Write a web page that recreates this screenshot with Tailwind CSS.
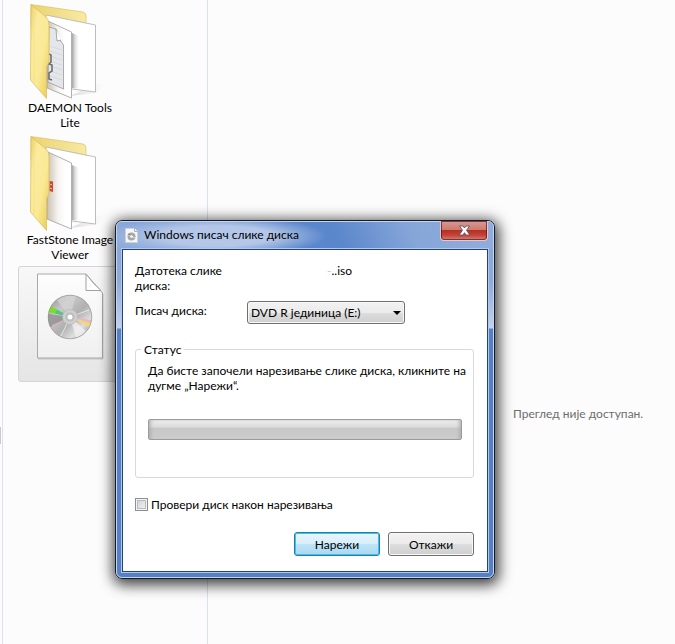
<!DOCTYPE html>
<html lang="sr">
<head>
<meta charset="utf-8">
<meta name="viewport" content="width=device-width, initial-scale=1">
<title>Windows писач слике диска</title>
<script src="https://cdn.jsdelivr.net/npm/@tailwindcss/browser@4"></script>
</head>
<body class="relative flex min-h-screen overflow-hidden bg-[#fcfcfc] font-['Lato','Open_Sans',sans-serif] text-[12px] leading-[15px] text-black">
<svg class="absolute size-0" aria-hidden="true">
  <defs>
    <linearGradient id="cover" x1="0" y1="0" x2="1" y2="1"><stop offset="0" stop-color="#e9ce68"/><stop offset=".25" stop-color="#fbeb9f"/><stop offset=".6" stop-color="#fae995"/><stop offset="1" stop-color="#eac94c"/></linearGradient>
    <linearGradient id="back" x1="0" y1="0" x2="1" y2="0"><stop offset="0" stop-color="#ecd370"/><stop offset="1" stop-color="#f8eaa4"/></linearGradient>
    <linearGradient id="sheetFront" x1="0" y1="0" x2="1" y2="0"><stop offset="0" stop-color="#c9c0b4"/><stop offset=".45" stop-color="#f6f4f1"/><stop offset=".75" stop-color="#fff"/></linearGradient>
    <linearGradient id="shade" x1="0" y1="0" x2="1" y2="0"><stop offset="0" stop-color="#999" stop-opacity=".9"/><stop offset="1" stop-color="#ddd" stop-opacity="0"/></linearGradient>
    <linearGradient id="paper" x1="0" y1="0" x2="0" y2="1"><stop offset="0" stop-color="#fdfdfd"/><stop offset="1" stop-color="#f0f0f0"/></linearGradient>
    <linearGradient id="disc" x1="0" y1="0" x2="1" y2="1"><stop offset="0" stop-color="#8e8e8e"/><stop offset=".3" stop-color="#c8c8c8"/><stop offset=".55" stop-color="#b0b0b0"/><stop offset=".75" stop-color="#dedede"/><stop offset="1" stop-color="#8a8a8a"/></linearGradient>
  </defs>
</svg>

<div class="w-[3px] shrink-0 border-r border-[#dbe3f1] pt-[427px]"><div class="h-[17px] w-px bg-[#c9cccf]"></div></div>

<main class="w-[205px] shrink-0 border-r border-[#d6e2ee] pt-[3px] pl-[15px]">
  <ul class="flex w-[104px] flex-col gap-[5px]">
    <li class="flex flex-col items-center text-center">
      <svg class="h-[97px] w-[104px]" viewBox="18 3 104 97" role="img" aria-label="Фасцикла">
        <path d="M70 96 L96 93 L108 83 L96 84Z" fill="url(#shade)" opacity=".4"/>
        <path d="M31 4.500 L83 12 Q86 13 86 16 V28 H31Z" fill="url(#back)" stroke="#dcc263" stroke-width=".7"/>
        <path d="M46 15 L95.500 25 V92 L72 89 L46 85Z" fill="#fff" stroke="#bdbdbd"/>
        <path d="M72 33 L79 36 V89 L72 88Z" fill="url(#shade)"/>
        <path d="M48 21 L71.500 32 V98 L47 88Z" fill="url(#sheetFront)" stroke="#a7a7a7" stroke-width=".9"/>
        <path d="M49 27 L56 29 L60 40 L63.500 45 V89 L48 82Z" fill="#e4e6ea" stroke="#999" stroke-width=".8"/>
        <path d="M56 29 L57 41 L61 40" fill="#fff" stroke="#888" stroke-width=".7"/>
        <path d="M50 46 L62 50 M50 51 L62 55 M50 56 L62 60 M50 61 L62 65 M50 66 L62 70 M50 71 L62 75 M50 76 L62 80" stroke="#ccd1dc" stroke-width=".7"/>
        <path d="M49 54 l2 1 v7 l-2 2 l3 1 v6 l-3 2 v6 l3 1" fill="none" stroke="#6a6a6a" stroke-width="1.500"/>
        <path d="M31 4.500 L46 17 Q49 20 49 24 V62 L46.500 67 V98.500 L30.500 80Z" fill="url(#cover)" stroke="#d9bb50" stroke-width=".7"/>
        <path d="M34 9 V82" stroke="#f5e182" stroke-width=".8"/>
      </svg>
      <span>DAEMON Tools<br>Lite</span>
    </li>
    <li class="flex flex-col items-center text-center">
      <svg class="h-[97px] w-[104px]" viewBox="18 3 104 97" role="img" aria-label="Фасцикла">
        <path d="M70 96 L96 93 L108 83 L96 84Z" fill="url(#shade)" opacity=".4"/>
        <path d="M31 4.500 L83 12 Q86 13 86 16 V28 H31Z" fill="url(#back)" stroke="#dcc263" stroke-width=".7"/>
        <path d="M46 15 L95.500 25 V92 L72 89 L46 85Z" fill="#fff" stroke="#bdbdbd"/>
        <path d="M72 33 L79 36 V89 L72 88Z" fill="url(#shade)"/>
        <path d="M48 20 L71.500 31 V97 L47 87Z" fill="url(#sheetFront)" stroke="#a7a7a7" stroke-width=".9"/>
        <path d="M49.500 49 L53 49.500 V60 L49.500 59Z" fill="#c9473a"/>
        <path d="M50 52 l2 1 M50 56 l2 1" stroke="#efc0b0"/>
        <path d="M31 4.500 L46 17 Q49 20 49 24 V62 L46.500 67 V98.500 L30.500 80Z" fill="url(#cover)" stroke="#d9bb50" stroke-width=".7"/>
        <path d="M34 9 V82" stroke="#f5e182" stroke-width=".8"/>
      </svg>
      <span class="whitespace-nowrap">FastStone Image<br>Viewer</span>
    </li>
    <li class="-mt-px flex h-[116px] flex-col items-center rounded-[3px] border border-[#d4d4d4] bg-linear-to-b from-[#f8f8f8] to-[#e5e5e5] pt-[5px]">
      <svg class="h-[88px] w-[68px]" viewBox="0 0 68 88" role="img" aria-label="Слика диска">
        <path d="M1.500 2 H50 L66.500 21 V86 H1.500Z" fill="url(#paper)" stroke="#a9a9a9"/>
        <path d="M2 87 H67 V22" fill="none" stroke="#8d8d8d" stroke-opacity=".4"/>
        <path d="M50 2 V18.500 H65 Q58 13 50 2Z" fill="#fff" stroke="#a0a0a0"/>
        <circle cx="34" cy="45" r="21.800" fill="url(#disc)"/>
        <path d="M34 45 L21 28 A21.500 21.500 0 0 1 40 24Z" fill="#d5d5d5" opacity=".7"/>
        <path d="M34 45 L40 66 A21.500 21.500 0 0 0 50 59Z" fill="#f1f1f1" opacity=".8"/>
        <path d="M34 45 L12.500 42 A22 22 0 0 0 14 55Z" fill="#808080" opacity=".6"/>
        <path d="M34 45 L12.500 40 L15 34.500Z" fill="#72e31c"/>
        <path d="M34 45 L21 37.500 L19 41.500Z" fill="#45b6b9" opacity=".7"/>
        <path d="M34 45 L55.500 49 L53.500 55Z" fill="#f0d77f"/>
        <path d="M34 45 L55 48 L54.500 51Z" fill="#eab7c1"/>
        <path d="M34 45 L16 53 L17 55Z" fill="#d7b3bd"/>
        <path d="M34 45 L53 38 M34 45 L25 64" stroke="#eee" stroke-width=".8"/>
        <circle cx="34" cy="45" r="7.500" fill="#cfcfcf" stroke="#b6b6b6" stroke-width=".6"/>
        <circle cx="34" cy="45" r="4.500" fill="#bcbcbc"/>
        <circle cx="34" cy="45" r="2.500" fill="#fff"/>
        <circle cx="34" cy="45" r="21.800" fill="none" stroke="#858585" stroke-width=".6"/>
      </svg>
    </li>
  </ul>
</main>

<aside class="flex-1 pt-[406px] pl-[305px] whitespace-nowrap text-[#6d6d6d]">Преглед није доступан.</aside>

<section role="dialog" aria-labelledby="title" class="absolute top-[220px] left-[115px] w-[380px] rounded-[7px] border border-[#131a28] bg-[linear-gradient(to_bottom,#88a5d6_0px,#8eaad9_60px,#c3d2ec_107px,#5580c4_108px,#5580c4_100%)] shadow-[1px_3px_14px_3px_rgba(0,0,0,0.75)]">
  <div class="rounded-[6px] border border-[#c3d5f1] px-[5px] pb-[5px]">
    <header class="-mx-[5px] flex h-[27px] items-start justify-between rounded-t-[5px] bg-[radial-gradient(ellipse_110px_20px_at_100px_14px,#b4c7e8_50%,transparent_100%),linear-gradient(70deg,#8eabdb_0%,#6890d0_35%,#5a86cb_45%,#5a86cb_58%,#86a6d9_78%,#91addc_100%)] pr-[5px] pl-[8px]">
      <div class="flex items-center gap-[6px] pt-[5px]">
        <svg class="h-[15px] w-[13px]" viewBox="0 0 13 15" aria-hidden="true"><path d="M.5.5H9.500L12.500 3.500V14.500H.5Z" fill="#f6f7f8" stroke="#cbd1d9"/><path d="M9.500.5V3.500H12.500" fill="#fff" stroke="#aab"/><circle cx="6.500" cy="8.500" r="4" fill="#a7a7a7"/><path d="M6.500 8.500L3 7V5.500M6.500 8.500L10 10" stroke="#ddd"/><circle cx="6.500" cy="8.500" r="1.300" fill="#fff"/></svg>
        <h1 id="title" class="text-[12px] leading-[16px] font-normal">Windows писач слике диска</h1>
      </div>
      <button type="button" aria-label="Затвори" class="-mt-px flex h-[20px] w-[48px] items-center justify-center rounded-b-[4px] border border-t-0 border-[#e7c5c9] bg-[linear-gradient(to_bottom,#d99a94_0%,#cf7b71_45%,#b92f20_50%,#c1443a_75%,#d88478_100%)] shadow-[inset_0_0_0_1px_rgba(86,20,20,0.7)]">
        <svg class="h-[11px] w-[13px]" viewBox="0 0 13 11" aria-hidden="true"><path d="M1.500 1H5L6.500 3L8 1H11.500L8.500 5.300L11.800 10H8L6.500 7.700L5 10H1.200L4.500 5.300Z" fill="#fff" stroke="#595564" stroke-width=".9" stroke-linejoin="round"/></svg>
      </button>
    </header>
    <form class="border border-[#24427a] bg-white pt-[13px] pr-[13px] pb-[15px] pl-[12px] outline outline-[#b4c9ea]">
      <div class="grid grid-cols-[112px_158px] items-start">
        <span>Датотека слике<br>диска:</span>
        <output class="flex items-baseline pl-[80px]" aria-label="Датотека слике диска"><span class="text-[#c8c8b4]">-</span>..iso</output>
        <label for="drive" class="pt-[10px]">Писач диска:</label>
        <div class="relative mt-[8px]">
          <select id="drive" class="block h-[23px] w-full appearance-none rounded-[3px] border border-[#707070] bg-[linear-gradient(to_bottom,#f2f2f2_0%,#ebebeb_50%,#dddddd_51%,#cfcfcf_100%)] pl-[3px] text-[12px] leading-[20px] shadow-[inset_0_0_0_1px_#f8f8f8]"><option>DVD R јединица (E:)</option></select>
          <svg class="pointer-events-none absolute top-[10px] right-[4px] h-[4px] w-[8px]" viewBox="0 0 8 4" aria-hidden="true"><path d="M0 0H8L4 4Z"/></svg>
        </div>
      </div>
      <fieldset class="mt-[18px] h-[136px] min-w-0 rounded-[3px] border border-[#d5dadb] pr-[11px] pl-[12px]">
        <legend class="-ml-[7px] px-[3px]">Статус</legend>
        <p class="mt-[6px] whitespace-nowrap">Да бисте започели нарезивање слике диска, кликните на<br>дугме „Нарежи“.</p>
        <div role="progressbar" aria-label="Статус" aria-valuenow="0" aria-valuemin="0" aria-valuemax="100" class="mt-[26px] h-[21px] rounded-[2px] border border-[#9b9b9b] bg-[linear-gradient(to_bottom,#f0f0f0_0%,#dcdcdc_35%,#c8c8c8_45%,#cacaca_85%,#d9d9d9_100%)] shadow-[inset_3px_0_4px_-2px_#a5a5a5,inset_-3px_0_4px_-2px_#a5a5a5]"></div>
      </fieldset>
      <label class="mt-[19px] flex items-center gap-[3px]"><input type="checkbox" class="size-[13px] appearance-none border border-[#8e8f8f] bg-linear-to-br from-[#cbcfd5] to-[#f6f6f6] shadow-[inset_0_0_0_1px_#f4f4f4,inset_0_0_0_2px_#b9bcc0]">Провери диск након нарезивања</label>
      <div class="mt-[20px] flex justify-end gap-[8px]">
        <button type="submit" class="h-[24px] w-[86px] rounded-[3px] border border-[#2c7ba5] bg-[linear-gradient(to_bottom,#eaf5fb_0%,#d7eefa_50%,#bee4f8_51%,#a9d9f2_100%)] shadow-[inset_0_0_0_1px_#35c4f2]">Нарежи</button>
        <button type="button" class="h-[24px] w-[86px] rounded-[3px] border border-[#707070] bg-[linear-gradient(to_bottom,#f2f2f2_0%,#ebebeb_50%,#dddddd_51%,#cfcfcf_100%)] shadow-[inset_0_0_0_1px_#f8f8f8]">Откажи</button>
      </div>
    </form>
  </div>
</section>
</body>
</html>
